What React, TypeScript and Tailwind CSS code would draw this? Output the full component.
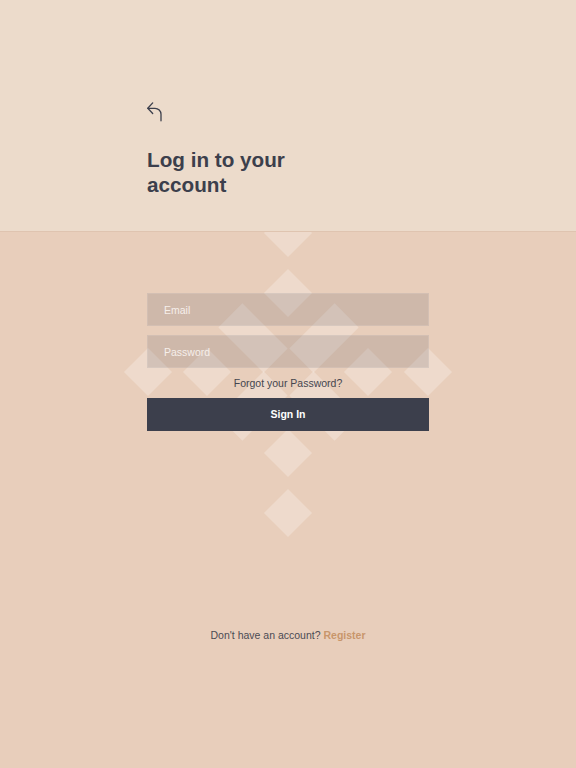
import React from "react";

const diamonds: Array<[number, number]> = [
  [288, 1],
  [288, 61],
  [148, 140],
  [207, 140],
  [368, 140],
  [428, 140],
  [288, 221],
  [288, 281],
];

const bars: Array<{ x: number; y: number; cls: string }> = [
  { x: 252.5, y: 106, cls: "rotate-45" },
  { x: 323.5, y: 106, cls: "-rotate-45" },
  { x: 252.5, y: 174, cls: "-rotate-45" },
  { x: 323.5, y: 174, cls: "rotate-45" },
];

export default function App() {
  return (
    <div
      className="min-h-screen w-full bg-[#e8cebb] flex flex-col"
      style={{ fontFamily: '"Liberation Sans", Arial, sans-serif' }}
    >
      <header className="relative z-10 h-[232px] bg-[#ecdbcb] border-b border-[#dfc4b0] pl-[147px] pt-[101px]">
        <svg
          className="-ml-[1px]"
          width="17"
          height="21"
          viewBox="0 0 17 21"
          fill="none"
          stroke="#3c3f4c"
          strokeWidth="1.3"
          strokeLinecap="round"
          strokeLinejoin="round"
        >
          <path d="M6.7 1.9 L1.8 7.3 L6.7 12.5" />
          <path d="M1.8 7.3 H9 A6 6 0 0 1 15 13.3 V19.8" />
        </svg>
        <h1 className="mt-[25px] w-[200px] text-[20.7px] leading-[25px] font-bold text-[#3c3f4c]">
          Log in to your account
        </h1>
      </header>
      <main className="relative flex-1 overflow-hidden flex flex-col items-center">
        {diamonds.map(([x, y], i) => (
          <div
            key={i}
            className="absolute w-[34px] h-[34px] rotate-45 bg-white/25"
            style={{ left: x - 17, top: y - 17 }}
          />
        ))}
        {bars.map((b, i) => (
          <div
            key={"b" + i}
            className={"absolute w-[64px] h-[34px] bg-white/25 " + b.cls}
            style={{ left: b.x - 32, top: b.y - 17 }}
          />
        ))}
        <div className="relative w-[282px] pt-[61px] flex flex-col">
          <input
            className="h-[33px] w-full bg-[#3c3f4c]/15 border border-white/10 pl-[16px] text-[10.5px] text-white placeholder:text-[#f6efea] outline-none"
            placeholder="Email"
          />
          <input
            type="password"
            className="mt-[9px] h-[33px] w-full bg-[#3c3f4c]/15 border border-white/10 pl-[16px] text-[10.5px] text-white placeholder:text-[#f6efea] outline-none"
            placeholder="Password"
          />
          <div className="mt-[8px] h-[14px] leading-[14px] text-center text-[10.5px] text-[#45464f]">
            Forgot your Password?
          </div>
          <button className="mt-[8px] h-[33px] w-full bg-[#3c3f4c] text-white font-bold text-[10.5px]">
            Sign In
          </button>
        </div>
        <div className="relative mt-[197px] h-[14px] leading-[14px] text-[10.5px] text-[#4b4b53]">
          Don't have an account?{" "}
          <span className="font-bold text-[#c8966b]">Register</span>
        </div>
      </main>
    </div>
  );
}
